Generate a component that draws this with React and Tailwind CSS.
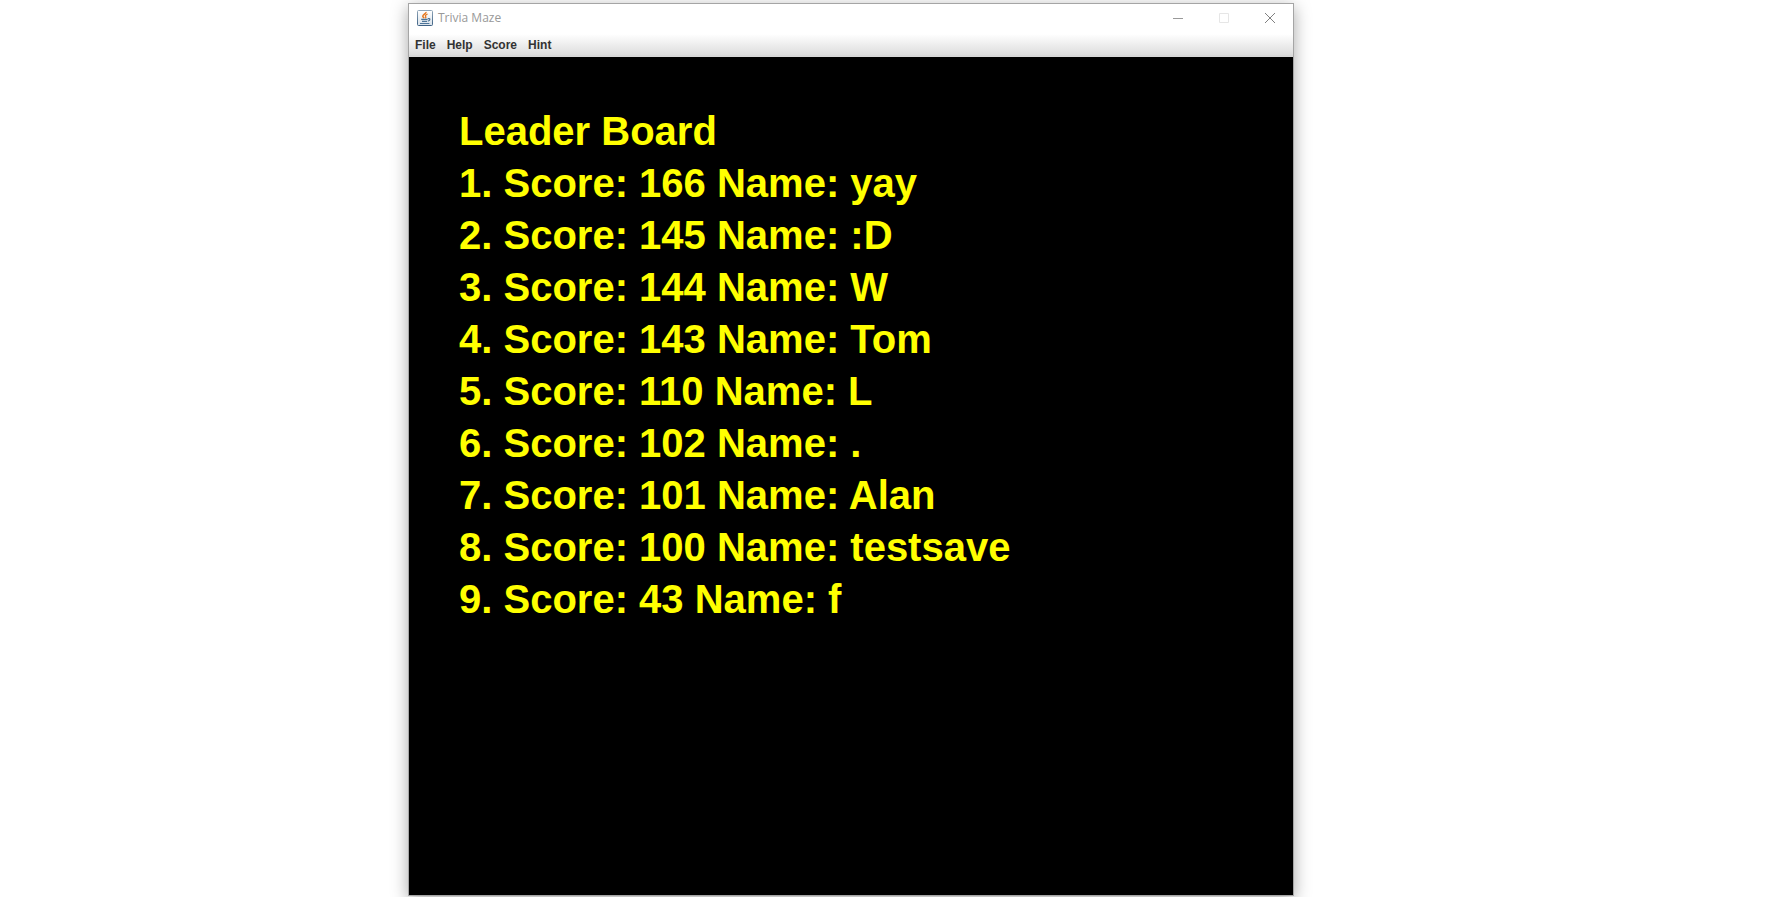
const menus = ["File", "Help", "Score", "Hint"];

const scores = [
  { score: 166, name: "yay" },
  { score: 145, name: ":D" },
  { score: 144, name: "W" },
  { score: 143, name: "Tom" },
  { score: 110, name: "L" },
  { score: 102, name: "." },
  { score: 101, name: "Alan" },
  { score: 100, name: "testsave" },
  { score: 43, name: "f" },
];

function JavaIcon() {
  return (
    <svg width="16" height="16" viewBox="0 0 16 16" aria-hidden="true">
      <defs>
        <linearGradient id="frame" x1="0" y1="0" x2="0" y2="1">
          <stop offset="0" stopColor="#8fa5b8" />
          <stop offset="1" stopColor="#3d6184" />
        </linearGradient>
        <linearGradient id="face" x1="0" y1="0" x2="0" y2="1">
          <stop offset="0" stopColor="#ffffff" />
          <stop offset="1" stopColor="#d9e2ea" />
        </linearGradient>
      </defs>
      <rect x="0.5" y="0.5" width="15" height="15" rx="1" fill="url(#face)" stroke="url(#frame)" />
      <path d="M9 2C9.4 3.8 5.6 4.5 5.8 6.3c.1.8 1 1.2 1.4 1.9" fill="none" stroke="#e6761c" strokeWidth="1.5" />
      <path d="M10.6 4C8.6 4.8 7.9 5.7 8.7 6.6c.4.5.2 1-.4 1.6" fill="none" stroke="#e6761c" strokeWidth="1.3" />
      <path d="M4.2 9.4H10.6M5 11.4H10M3 13.5H12.4" fill="none" stroke="#4d7599" strokeWidth="1.1" />
      <path d="M10.8 8.7c2.6-.7 3 1.5 0 2.6" fill="none" stroke="#4d7599" strokeWidth="1.2" />
    </svg>
  );
}

function WindowButton({ label, className, children, disabled = false }) {
  return (
    <button type="button" aria-label={label} disabled={disabled} className={`flex w-[46px] items-center justify-center ${className}`}>
      <svg width="10" height="10" viewBox="0 0 10 10" fill="none" stroke="currentColor">
        {children}
      </svg>
    </button>
  );
}

export default function App() {
  return (
    <div className="grid min-h-screen grid-cols-[408fr_886fr_496fr] overflow-hidden bg-white pt-[3px] pb-px font-['Liberation_Sans',Arial,sans-serif]">
      <main className="col-start-2 flex flex-col border border-[#a5a5a5] bg-black shadow-[0_4px_16px_0_rgba(0,0,0,0.35)]">
        <header className="flex h-[30px] bg-white">
          <div className="flex flex-1 items-center gap-[5px] pl-2 pb-0.5">
            <JavaIcon />
            <span className="font-['Open_Sans',sans-serif] text-[12px] leading-4 text-[#999999]">Trivia Maze</span>
          </div>
          <div className="flex pb-0.5">
            <WindowButton label="Minimize" className="text-[#999999]">
              <path d="M0 5.5H10" />
            </WindowButton>
            <WindowButton label="Maximize" className="text-[#e6e6e6]" disabled>
              <path d="M0.5 0.5H9.5V9.5H0.5Z" />
            </WindowButton>
            <WindowButton label="Close" className="text-[#808080]">
              <path d="M0 0L10 10M10 0L0 10" />
            </WindowButton>
          </div>
        </header>
        <nav className="flex h-[23px] items-center gap-[11px] border-b-2 border-[#d8d8d8] bg-linear-to-b from-white to-[#dddddd] pl-1.5">
          {menus.map((menu) => (
            <button key={menu} type="button" className="text-[12px] leading-4 font-bold text-[#333333]">
              {menu}
            </button>
          ))}
        </nav>
        <section className="flex-1 px-[50px] py-12 text-[40px] leading-[52px] font-bold text-[#ffff00]">
          <h1>Leader Board</h1>
          <ol>
            {scores.map(({ score, name }, index) => (
              <li key={name}>{`${index + 1}. Score: ${score} Name: ${name}`}</li>
            ))}
          </ol>
        </section>
      </main>
    </div>
  );
}
